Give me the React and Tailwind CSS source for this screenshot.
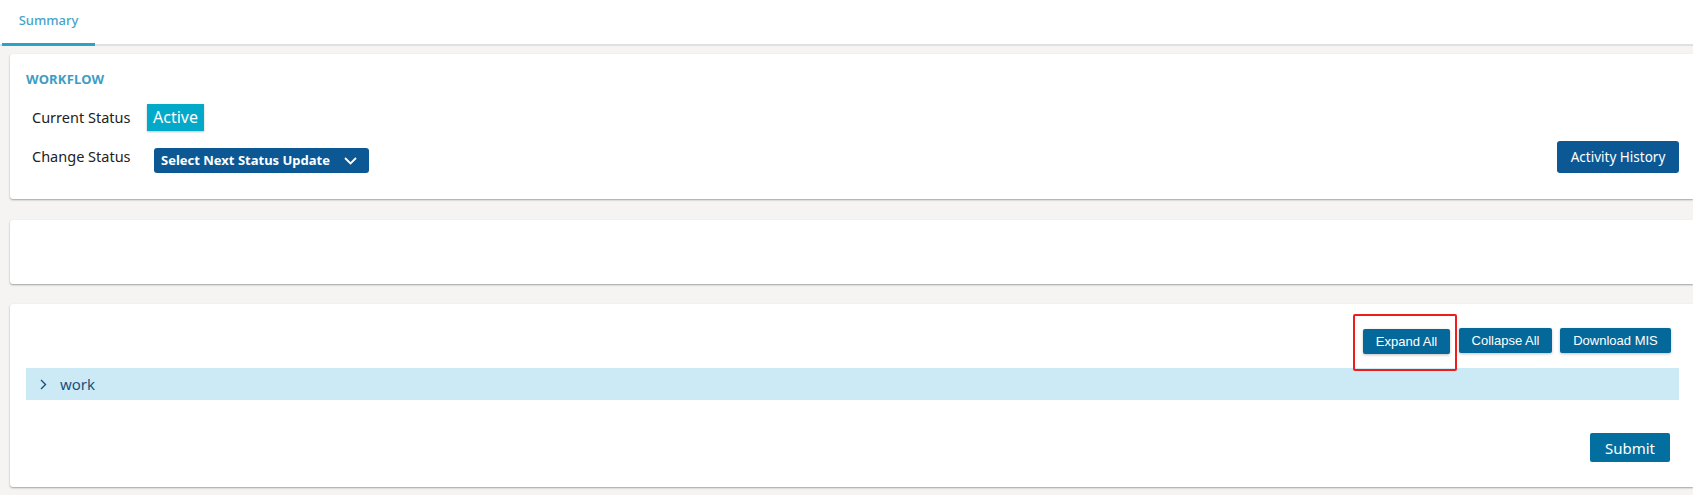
import React from 'react';

const font = { fontFamily: '"Segoe UI", "Noto Sans", "Open Sans", sans-serif' };

const ChevronDown = () => (
  <svg width="13" height="8" viewBox="0 0 13 8" fill="none">
    <path d="M1 1l5.5 5.5L12 1" stroke="white" strokeWidth="1.8" />
  </svg>
);

const ChevronRight = () => (
  <svg width="7" height="11" viewBox="0 0 7 11" fill="none">
    <path d="M1 1l4.5 4.5L1 10" stroke="#1d4e7a" strokeWidth="1.4" />
  </svg>
);

const Card = ({ className = '', children }) => (
  <div className={`bg-white rounded-l-[3px] shadow-[0_1px_2px_rgba(0,0,0,0.35)] ${className}`}>{children}</div>
);

const ToolButton = ({ className = '', children }) => (
  <button className={`h-[25px] bg-[#05689b] text-white text-[13px] rounded-[2px] shadow-[0_1px_3px_rgba(0,0,0,0.25)] font-['Liberation_Sans',Arial,sans-serif] ${className}`}>
    {children}
  </button>
);

export default function App() {
  return (
    <div className="min-h-[495px] bg-[#f5f4f2] overflow-hidden" style={font}>
      {/* Tabs */}
      <div className="bg-white h-[46px] border-b-2 border-[#dde0e5] flex items-end">
        <div className="ml-[2px] w-[93px] h-[46px] -mb-[2px] border-b-[3px] border-[#2aa3c7] flex items-center justify-center pb-[2px]">
          <span className="text-[13px] text-[#48a3c9] font-medium">Summary</span>
        </div>
      </div>

      <div className="pl-[10px] pt-[8px]">
        {/* Workflow */}
        <Card className="pt-[17px] pl-[16px] pr-[14px] pb-[26px]">
          <div className="text-[13px] leading-[16px] font-bold text-[#3d9dc5] tracking-[0.2px]">WORKFLOW</div>
          <div className="mt-[17px] flex items-center">
            <div className="w-[121px] pl-[6px] text-[14.5px] text-[#222]">Current Status</div>
            <div className="h-[27px] px-[6px] bg-[#02a9c9] text-white text-[16px] leading-[27px] shadow-[0_1px_2px_rgba(0,0,0,0.25)]">Active</div>
          </div>
          <div className="mt-[10px] flex justify-between items-end">
            <div className="flex items-start">
              <div className="w-[128px] pl-[6px] pt-[4px] text-[14.5px] leading-[20px] text-[#222]">Change Status</div>
              <button className="mt-[6px] w-[215px] h-[25px] pl-[7px] pr-[12px] bg-[#0b5894] rounded-[3px] flex items-center justify-between text-white text-[13px] font-bold">
                <span>Select Next Status Update</span>
                <ChevronDown />
              </button>
            </div>
            <button className="h-[32px] w-[122px] bg-[#0b5894] rounded-[3px] text-white text-[13.5px]">Activity History</button>
          </div>
        </Card>

        <Card className="mt-[21px] h-[64px]" />

        {/* Sections */}
        <Card className="mt-[20px] pt-[24px] pl-[16px] pr-[14px] pb-[25px]">
          <div className="flex justify-end gap-[8px] pr-[8px]">
            <div className="relative">
              <ToolButton className="w-[87px]">Expand All</ToolButton>
              <div className="absolute -left-[10px] -right-[7px] -top-[14px] -bottom-[17px] border-2 border-[#ee1c1c] rounded-[2px] pointer-events-none" />
            </div>
            <ToolButton className="w-[93px] ml-[1px]">Collapse All</ToolButton>
            <ToolButton className="w-[111px]">Download MIS</ToolButton>
          </div>
          <div className="mt-[14px] h-[32px] bg-[#cbeaf6] flex items-center pl-[14px] gap-[13px]">
            <ChevronRight />
            <span className="text-[15px] text-[#1d4e7a]">work</span>
          </div>
          <div className="mt-[33px] flex justify-end pr-[9px]">
            <button className="h-[29px] w-[80px] bg-[#036ea0] rounded-[2px] text-white text-[15px]">Submit</button>
          </div>
        </Card>
      </div>
    </div>
  );
}
